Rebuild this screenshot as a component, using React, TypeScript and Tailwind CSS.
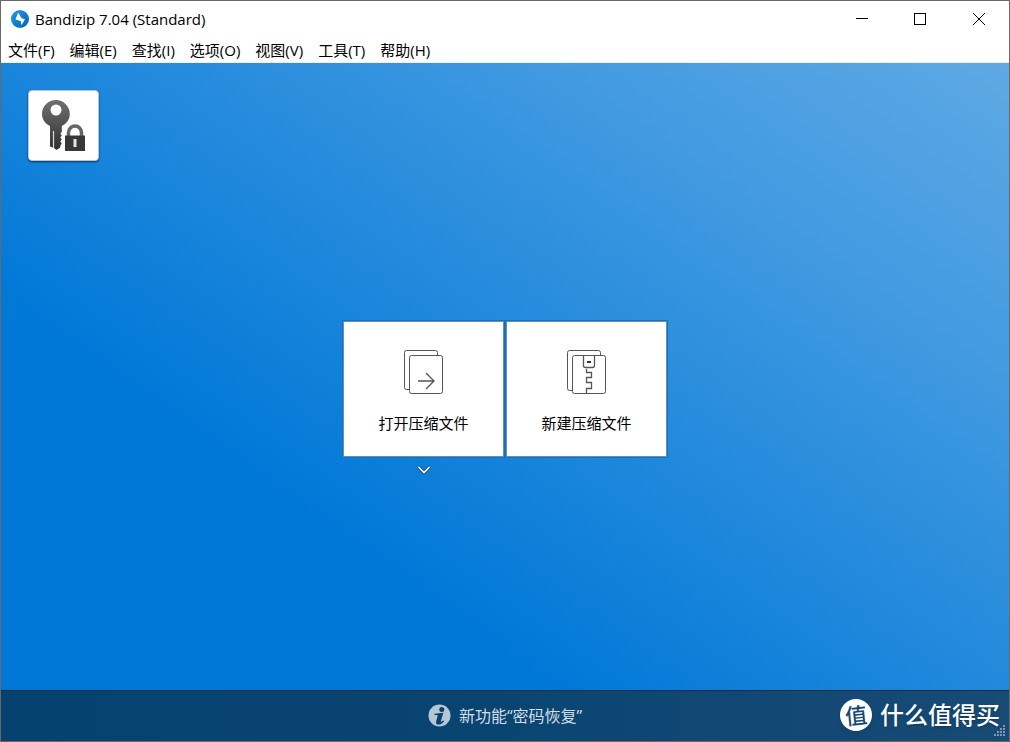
import { ReactNode } from "react";

const menus = [
  "文件(F)",
  "编辑(E)",
  "查找(I)",
  "选项(O)",
  "视图(V)",
  "工具(T)",
  "帮助(H)",
];

function AppLogo() {
  return (
    <svg width="18" height="18" viewBox="0 0 18 18" aria-hidden="true">
      <defs>
        <linearGradient id="logo" x1="0" y1="0" x2="1" y2="1">
          <stop offset="0" stopColor="#1f9cf0" />
          <stop offset="1" stopColor="#0560b4" />
        </linearGradient>
      </defs>
      <circle cx="9" cy="9" r="9" fill="url(#logo)" />
      <path d="M7.500 3 10.500 8.300l3.500.9-3.300 5.600-.6-.2L9.800 11 4.500 9.500 7 3z" fill="#fff" />
    </svg>
  );
}

function KeyLockIcon() {
  return (
    <svg width="44" height="52" viewBox="0 0 44 52" aria-hidden="true">
      <defs>
        <linearGradient id="metal" x1="0" y1="0" x2="0" y2="1">
          <stop offset="0" stopColor="#707070" />
          <stop offset="1" stopColor="#303030" />
        </linearGradient>
      </defs>
      <path
        fill="url(#metal)"
        fillRule="evenodd"
        d="M14 0a14 14 0 0 1 13.8 14c0 5.500-3.200 9.600-8 12v6l-1.500 1.500 1.500 2-1.500 2 1.500 2-1.500 2 1.500 2-1.500 2v2L14.500 50 12 48l-4-1.500V26C3.200 23.600 0 19.500 0 14A14 14 0 0 1 14 0zm0 4.500a5.500 5.500 0 1 0 0 11 5.500 5.500 0 0 0 0-11z"
      />
      <path d="M11.500 31v17" stroke="#d8d8d8" strokeWidth="1.200" />
      <path
        d="M26.500 37v-4.500a6.500 6.500 0 0 1 13 0V37"
        fill="none"
        stroke="#666"
        strokeWidth="3.500"
      />
      <path d="M23 35.500h20V51H23z" fill="#383838" />
      <path d="M31.500 39h3v8h-3z" fill="#e8e8e8" />
    </svg>
  );
}

function OpenIcon() {
  return (
    <svg width="39" height="45" viewBox="0 0 39 45" fill="none" stroke="#555" aria-hidden="true">
      <path d="M33.500 5.500v-3a2 2 0 0 0-2-2h-29a2 2 0 0 0-2 2v35a2 2 0 0 0 2 2h3" />
      <rect x="5.500" y="5.500" width="33" height="38" rx="2" />
      <path d="M14 31h16M22 23l8 8-8 8" strokeWidth="1.300" />
    </svg>
  );
}

function NewIcon() {
  return (
    <svg width="39" height="45" viewBox="0 0 39 45" fill="none" stroke="#555" aria-hidden="true">
      <path d="M33.500 5.500v-3a2 2 0 0 0-2-2h-29a2 2 0 0 0-2 2v36a2 2 0 0 0 2 2h3" />
      <rect x="5.500" y="5.500" width="33" height="38" rx="2" />
      <path d="M16.500 5.500v10a2 2 0 0 0 2 2h7a2 2 0 0 0 2-2v-10M19.500 19v3.500h5v5h-5v5h5v6h-5v5" strokeWidth="1.300" />
      <rect x="20.500" y="11.500" width="3" height="1" fill="#333" stroke="#333" />
    </svg>
  );
}

function Tile({ icon, label }: { icon: ReactNode; label: string }) {
  return (
    <button
      type="button"
      className="flex h-[136px] w-[161px] flex-col items-center gap-[18px] border border-[#5e94bb] bg-white pt-7 text-[15px] leading-5 text-black outline-1 outline-[#1a6fb8]"
    >
      {icon}
      <span>{label}</span>
    </button>
  );
}

export default function App() {
  return (
    <div className="flex min-h-screen flex-col border border-[#696969] bg-white font-['Open_Sans','Noto_Sans_CJK_SC',sans-serif] text-[15px] text-black">
      <header>
        <div className="flex h-9 items-center pl-[10px]">
          <AppLogo />
          <h1 className="ml-[6px] flex-1 leading-5">Bandizip 7.04 (Standard)</h1>
          <button type="button" aria-label="最小化" className="flex h-9 w-[58px] items-center justify-center">
            <svg width="12" height="12" stroke="#000">
              <path d="M0 5.500h12" />
            </svg>
          </button>
          <button type="button" aria-label="最大化" className="flex h-9 w-[58px] items-center justify-center">
            <svg width="12" height="12" stroke="#000" fill="none">
              <rect x=".5" y=".5" width="11" height="11" />
            </svg>
          </button>
          <button type="button" aria-label="关闭" className="flex h-9 w-[60px] items-center justify-center">
            <svg width="12" height="12" stroke="#000">
              <path d="M0 0l12 12M12 0L0 12" />
            </svg>
          </button>
        </div>
        <nav className="flex h-[26px] items-center gap-[15px] border-b border-[#f0f0f0] pl-[7px]">
          {menus.map((menu) => (
            <button key={menu} type="button" className="leading-5 whitespace-nowrap">
              {menu}
            </button>
          ))}
        </nav>
      </header>

      <main className="flex flex-1 flex-col bg-[linear-gradient(35deg,#0078d7_0%,#0078d7_29%,#429ae1_76%,#5ea9e4_100%)]">
        <div className="px-[27px] pt-[27px]">
          <button
            type="button"
            aria-label="密码管理器"
            className="flex size-[71px] items-center justify-center rounded-sm border border-[#b5c8d8] bg-white shadow-[0_1px_2px_#00000099]"
          >
            <KeyLockIcon />
          </button>
        </div>
        <div className="flex flex-1 items-center justify-center pb-12">
          <div className="grid grid-cols-2 justify-items-center gap-x-[2px]">
            <Tile icon={<OpenIcon />} label="打开压缩文件" />
            <Tile icon={<NewIcon />} label="新建压缩文件" />
            <button type="button" aria-label="最近的文件" className="flex h-[26px] w-10 items-center justify-center">
              <svg width="14" height="10" viewBox="0 0 14 10" fill="none">
                <path d="M1.500 2 7 7.500 12.500 2" stroke="#1d4e78" strokeWidth="3.500" />
                <path d="M1.500 2 7 7.500 12.500 2" stroke="#fff" strokeWidth="1.600" />
              </svg>
            </button>
          </div>
        </div>
      </main>

      <footer className="grid h-[51px] grid-cols-[1fr_auto_1fr] items-center border-t border-[#1b2a38] bg-linear-to-r from-[#06426f] via-[#0a4572] to-[#184b76]">
        <a href="#whats-new" className="col-start-2 flex items-center gap-2 text-base leading-5 text-[#d3dee7]">
          <svg width="23" height="24" viewBox="0 0 23 24" aria-hidden="true">
            <circle cx="11.500" cy="11.500" r="11" fill="#b5c6d5" />
            <circle cx="13.800" cy="5.500" r="2.500" fill="#0a416c" />
            <path
              d="M6.500 9.800 15.400 8.800l-2.500 8.300c-.2 1 .3 1 .9.500l1.400-1.300.9.900c-1.700 2.300-3.500 3.400-5.500 3.400-2.300 0-2.900-1.500-2.400-3.400l1.400-5.200c.1-.6-.1-.9-.8-.9H6.500z"
              fill="#0a416c"
            />
          </svg>
          <span>新功能“密码恢复”</span>
        </a>
        <div className="relative flex items-center justify-end gap-2 self-stretch pr-[9px] pb-[2px] text-white">
          <span className="flex size-8 items-center justify-center rounded-full bg-white text-[22px] leading-8 font-medium text-[#174872] shadow-md">
            <span className="-rotate-6">值</span>
          </span>
          <span className="text-2xl leading-8 font-medium whitespace-nowrap text-shadow-md">什么值得买</span>
          <svg width="12" height="12" viewBox="0 0 12 12" fill="#7c98b0" className="absolute right-1 bottom-1" aria-hidden="true">
            <path d="M10 0h2v2h-2zM7 3h2v2H7zM10 3h2v2h-2zM4 6h2v2H4zM7 6h2v2H7zM10 6h2v2h-2zM1 9h2v2H1zM4 9h2v2H4zM7 9h2v2H7zM10 9h2v2h-2z" />
          </svg>
        </div>
      </footer>
    </div>
  );
}
